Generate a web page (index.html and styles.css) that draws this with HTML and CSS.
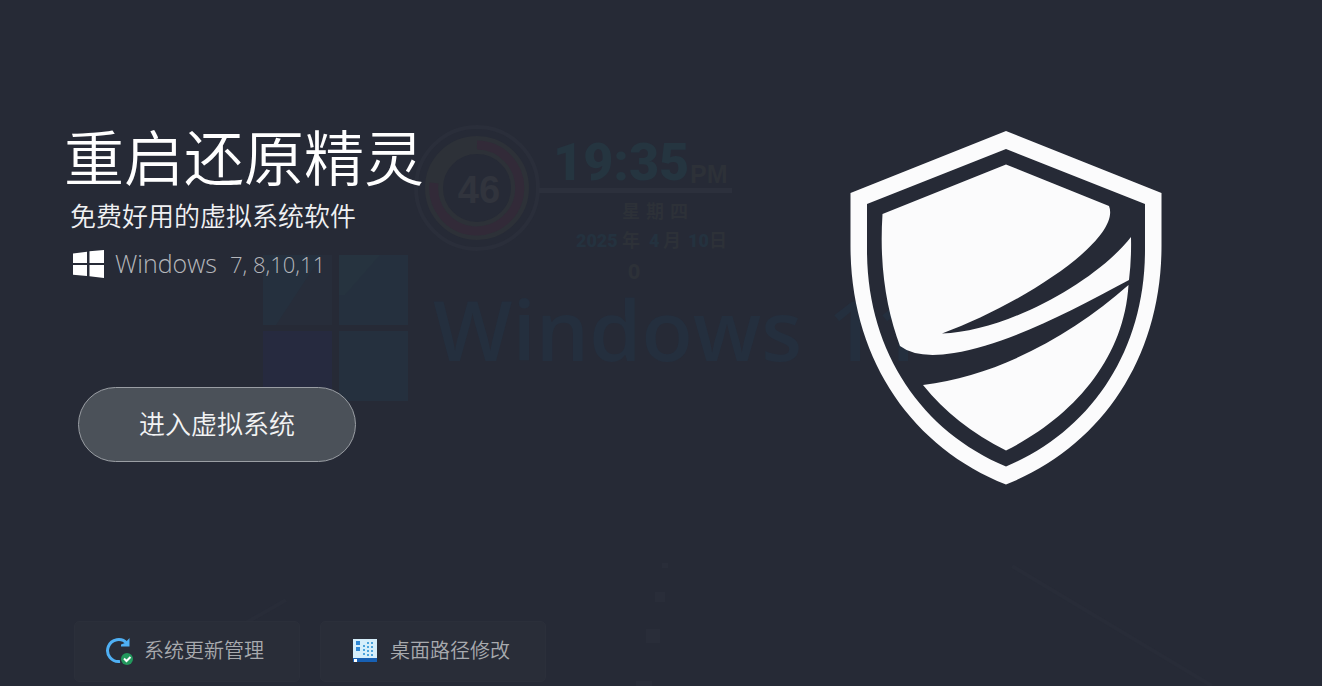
FILE: index.html
```html
<!DOCTYPE html>
<html lang="zh-CN">
<head>
<meta charset="utf-8">
<title>重启还原精灵</title>
<link rel="stylesheet" href="styles.css">
</head>
<body>
<svg class="backdrop" viewBox="0 0 1322 686" preserveAspectRatio="xMinYMin slice" aria-hidden="true">
  <g class="rays">
    <path d="M1012 566L1212 686"/>
    <path d="M286 600L140 683"/>
  </g>
  <g class="specks">
    <rect x="662" y="563" width="6" height="5"/>
    <rect x="655" y="592" width="10" height="10"/>
    <rect x="646" y="629" width="14" height="14"/>
    <rect x="636" y="681" width="16" height="5"/>
  </g>
  <g class="panes">
    <rect class="pane-a" x="263" y="255" width="69" height="70"/>
    <path class="pane-shade" d="M322 255H332V325H276Z"/>
    <rect class="pane-a" x="339" y="255" width="69" height="70"/>
    <path class="pane-tint" d="M339 255H380L345 295H339Z"/>
    <rect class="pane-b" x="263" y="331" width="69" height="70"/>
    <rect class="pane-a" x="339" y="331" width="69" height="70"/>
  </g>
  <text class="brand" y="361"><tspan x="433">Windows</tspan><tspan x="828">11</tspan></text>
  <circle class="ring-outer" cx="477" cy="188" r="61"/>
  <circle class="ring-track" cx="477" cy="188" r="43"/>
  <path class="ring-value" d="M477 145A43 43 0 1 1 434 183"/>
  <text class="gauge" x="479" y="203">46</text>
  <path class="rule" d="M539 190.500H732"/>
  <text class="clock" x="553" y="180">19:35</text>
  <text class="meridiem" x="690" y="183">PM</text>
  <text class="weekday" x="622" y="218">星期四</text>
  <text class="date" y="247"><tspan class="digits" x="576">2025</tspan><tspan x="622">年</tspan><tspan class="digits" x="649">4</tspan><tspan x="663">月</tspan><tspan class="digits" x="688">10</tspan><tspan x="709">日</tspan></text>
  <text class="zero" x="634" y="279">0</text>
</svg>
<main class="page">
  <section class="hero">
    <div class="intro">
      <h1 class="title">重启还原精灵</h1>
      <p class="subtitle">免费好用的虚拟系统软件</p>
      <p class="platforms">
        <svg class="win-logo" viewBox="0 0 31 28" aria-hidden="true"><path d="M0 3.500L14 1.700V13H0ZM16.500 1.300L31 0V13H16.500ZM0 15H14V26L0 24.800ZM16.500 15H31V28L16.500 26.300Z"/></svg>
        <span>Windows&nbsp; <span class="versions">7, 8,10,11</span></span>
      </p>
      <button class="enter" type="button">进入虚拟系统</button>
    </div>
    <svg class="shield" viewBox="850 130 312 356" role="img" aria-label="盾牌">
      <path fill-rule="evenodd" d="M1006 131L1161.500 193V246C1161.500 358 1101 447 1006 484.500C911 447 850.500 358 850.500 246V193ZM1006 149L867 204V250C867 351 921 431 1006 466.500C1091 431 1145 351 1145 250V204Z"/>
      <path d="M1006 164.500L1109 206C1122 239 1024 303 942 333.500C1004 332 1095 283 1131 237Q1131.500 260 1129 280C1066 314 1005 345 954 353Q917 359 900 346C887 311 879 268 882.500 214Z"/>
      <path d="M1128.500 285C1071 336 997 376 923 385Q955 425 1006 450.500C1073 417 1124 359 1128.500 285Z"/>
    </svg>
  </section>
  <nav class="tools">
    <button class="tool" type="button">
      <svg class="tool-icon" viewBox="0 0 28 28" aria-hidden="true">
        <path class="sync" d="M22 6.500A11 11 0 1 0 15 24.500"/>
        <path class="sync-head" d="M24.500 1V9.500H16V7.500L20 6Z"/>
        <circle class="ok" cx="22" cy="22" r="6"/>
        <path class="tick" d="M19 21.500L21.500 24L25.500 20"/>
      </svg>
      <span>系统更新管理</span>
    </button>
    <button class="tool" type="button">
      <svg class="tool-icon" viewBox="0 0 28 28" aria-hidden="true">
        <path fill="#d5eefb" d="M2 2H26V22H2Z"/>
        <path fill="#1760b4" d="M2 21H26V25H2Z"/>
        <path fill="#2d86d3" d="M5 4H9V8H5ZM5 10H9V14H5Z"/>
        <path class="dots" d="M13 8V20M17 5V20M21 5V20"/>
        <path fill="#fff" d="M3 22H6V25H3Z"/>
      </svg>
      <span>桌面路径修改</span>
    </button>
  </nav>
</main>
</body>
</html>
```
FILE: styles.css
```css
* { box-sizing: border-box; }
body {
  margin: 0;
  background: #262a36;
  color: #fff;
  font-family: "Noto Sans", "Noto Sans CJK SC", sans-serif;
}
.backdrop {
  position: absolute;
  inset: 0;
  width: 100%;
  height: 100%;
  z-index: -1;
}
.rays { stroke: #282c38; stroke-width: 4; }
.specks { fill: #292d39; }
.pane-a { fill: #25303e; }
.pane-b { fill: #262a3f; }
.pane-shade { fill: #272d3a; }
.pane-tint { fill: #26333f; }
.brand { fill: #242f3e; font: 600 84px "Open Sans", sans-serif; }
.ring-outer { fill: none; stroke: #2a2e3a; stroke-width: 4; }
.ring-track { fill: none; stroke: #2d3138; stroke-width: 18; }
.ring-value { fill: none; stroke: #322a38; stroke-width: 9; }
.gauge { fill: #31343d; font: 700 38px "Liberation Sans", sans-serif; text-anchor: middle; }
.rule { stroke: #2c303c; stroke-width: 5; }
.clock { fill: #253540; font: 900 52px Roboto, sans-serif; }
.meridiem { fill: #2d3138; font: 700 25px "Liberation Sans", sans-serif; }
.weekday { fill: #2d3138; font: 700 18px "Noto Sans CJK SC", sans-serif; letter-spacing: 6px; }
.date { fill: #2d3138; font: 700 18px "Noto Sans CJK SC", sans-serif; }
.date .digits { fill: #24323f; font: 900 18px Roboto, sans-serif; }
.zero { fill: #2d3138; font: 700 22px "Noto Sans", sans-serif; text-anchor: middle; }

.page {
  min-height: 100vh;
  display: flex;
  flex-direction: column;
  justify-content: space-between;
  gap: 32px;
  padding: 120px 160px 4px 64px;
}
.hero {
  display: flex;
  justify-content: space-between;
  align-items: flex-start;
  gap: 32px;
}
.intro { display: flex; flex-direction: column; align-items: flex-start; }
.title {
  margin: 0;
  font: 350 60px/70px "Noto Sans CJK SC", sans-serif;
}
.subtitle {
  margin: 5px 0 0 6px;
  color: #f0f1f3;
  font: 350 26px/40px "Noto Sans CJK SC", sans-serif;
}
.platforms {
  display: flex;
  align-items: center;
  gap: 11px;
  margin: 8px 0 0 9px;
  color: #b4b6bb;
  font: 300 25px/40px "Open Sans", sans-serif;
}
.versions { font-size: 22px; }
.win-logo { width: 31px; height: 28px; fill: #fff; }
.enter {
  margin: 103px 0 0 14px;
  padding: 0 60px 4px;
  height: 75px;
  border: 1px solid #9a9ea4;
  border-radius: 38px;
  background: #4b5159;
  color: #f2f3f4;
  font: 350 26px/40px "Noto Sans CJK SC", sans-serif;
}
.shield { width: 312px; height: 356px; margin-top: 10px; fill: #fbfbfc; flex-shrink: 0; }
.tools { display: flex; gap: 20px; margin-left: 10px; }
.tool {
  display: flex;
  align-items: center;
  gap: 11px;
  width: 226px;
  height: 61px;
  padding: 0 30px 2px;
  border: 1px solid #2b2f3a;
  border-radius: 5px;
  background: #292d38;
  color: #a8aaae;
  font: 350 20px/28px "Noto Sans CJK SC", sans-serif;
}
.tool-icon { width: 28px; height: 28px; flex-shrink: 0; }
.tool span { padding-bottom: 2px; }
.sync { fill: none; stroke: #4fb0f4; stroke-width: 3; }
.sync-head { fill: #4fb0f4; }
.ok { fill: #23985d; }
.tick { fill: none; stroke: #fff; stroke-width: 2; }
.dots { stroke: #4ba3dc; stroke-width: 2; stroke-dasharray: 2 2; }
```
